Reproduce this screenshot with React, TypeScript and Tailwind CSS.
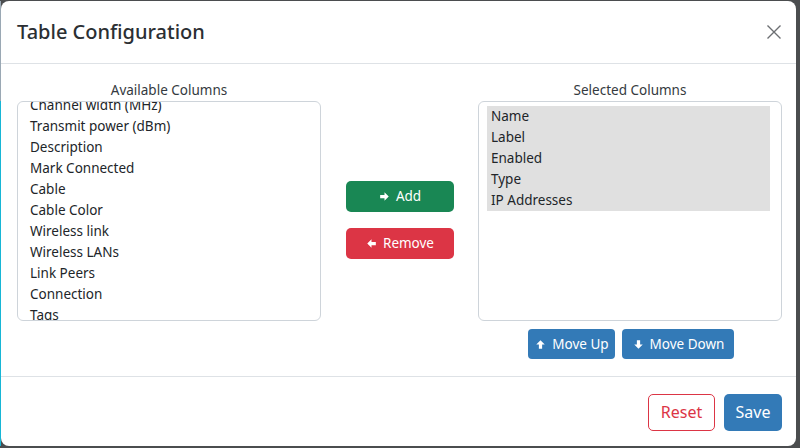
import { useState } from 'react'

const available = [
  'Channel width (MHz)',
  'Transmit power (dBm)',
  'Description',
  'Mark Connected',
  'Cable',
  'Cable Color',
  'Wireless link',
  'Wireless LANs',
  'Link Peers',
  'Connection',
  'Tags',
]

const selectedCols = ['Name', 'Label', 'Enabled', 'Type', 'IP Addresses']

type ArrowDir = 'right' | 'left' | 'up' | 'down'

const arrowPaths: Record<ArrowDir, string> = {
  right: 'M4,15V9H12V4.16L19.84,12L12,19.84V15H4Z',
  left: 'M20,9V15H12V19.84L4.16,12L12,4.16V9H20Z',
  up: 'M15,20H9V12H4.16L12,4.16L19.84,12H15V20Z',
  down: 'M9,4H15V12H19.84L12,19.84L4.16,12H9V4Z',
}

function Arrow({ dir }: { dir: ArrowDir }) {
  return (
    <svg viewBox="0 0 24 24" className="w-[13px] h-[13px] fill-current">
      <path d={arrowPaths[dir]} />
    </svg>
  )
}

export default function App() {
  const [picked] = useState(selectedCols)

  return (
    <div className="w-[800px] h-[448px] bg-[#4b4d4f] flex pt-px pb-[2px] pr-[4px] font-['Noto_Sans',sans-serif] text-[#212529]">
      {/* backdrop strip on the left */}
      <div className="w-px flex flex-col">
        <div className="h-[100px] bg-[#9aa8b4]" />
        <div className="flex-1 bg-[#17b6d6]" />
      </div>

      <div className="flex-1 bg-white rounded-[8px] flex flex-col overflow-hidden">
        {/* header */}
        <div className="h-[63px] flex items-center justify-between pl-[16px] pr-[14px] border-b border-[#dee2e6]">
          <h1 className="text-[20px] font-medium text-[#2b2f33]">Table Configuration</h1>
          <button className="text-[#6c6f72]" title="Close">
            <svg viewBox="0 0 16 16" className="w-[16px] h-[16px]" stroke="currentColor" strokeWidth="1.4" fill="none">
              <path d="M1.5 1.5L14.5 14.5M14.5 1.5L1.5 14.5" />
            </svg>
          </button>
        </div>

        {/* body */}
        <div className="flex-1 flex pl-[16px] pt-[16px]">
          <div className="w-[304px] flex flex-col">
            <div className="text-[13.5px] text-center leading-[21px] text-[#343a40]">Available Columns</div>
            <div className="h-[220px] border border-[#ced4da] rounded-[6px] overflow-hidden px-[8px] pt-[4px]">
              <ul className="-mt-[11px] text-[13.5px] leading-[21px]">
                {available.map((c) => (
                  <li key={c} className="px-[4px] whitespace-nowrap">{c}</li>
                ))}
              </ul>
            </div>
          </div>

          <div className="w-[157px] flex flex-col items-center pt-[101px] gap-[16px]">
            <button className="w-[108px] h-[31px] rounded-[5px] bg-[#198754] text-white text-[13.5px] flex items-center justify-center gap-[5px]">
              <Arrow dir="right" />
              Add
            </button>
            <button className="w-[108px] h-[31px] rounded-[5px] bg-[#dc3545] text-white text-[13.5px] flex items-center justify-center gap-[5px]">
              <Arrow dir="left" />
              Remove
            </button>
          </div>

          <div className="w-[304px] flex flex-col">
            <div className="text-[13.5px] text-center leading-[21px] text-[#343a40]">Selected Columns</div>
            <div className="h-[220px] border border-[#ced4da] rounded-[6px] overflow-hidden pl-[8px] pr-[11px] pt-[4px]">
              <ul className="text-[13.5px] leading-[21px]">
                {picked.map((c) => (
                  <li key={c} className="px-[4px] bg-[#e0e0e0] whitespace-nowrap">{c}</li>
                ))}
              </ul>
            </div>
            <div className="flex justify-center gap-[7px] mt-[8px] pl-[2px]">
              <button className="w-[87px] h-[30px] rounded-[4px] bg-[#337ab7] text-white text-[13.5px] flex items-center justify-center gap-[5px]">
                <Arrow dir="up" />
                Move Up
              </button>
              <button className="w-[112px] h-[30px] rounded-[4px] bg-[#337ab7] text-white text-[13.5px] flex items-center justify-center gap-[5px]">
                <Arrow dir="down" />
                Move Down
              </button>
            </div>
          </div>
        </div>

        {/* footer */}
        <div className="h-[70px] border-t border-[#dee2e6] flex items-center justify-end gap-[9px] pr-[14px] pt-[1px]">
          <button className="w-[67px] h-[37px] rounded-[5px] border border-[#dc3545] text-[#dc3545] text-[16px]">Reset</button>
          <button className="w-[58px] h-[37px] rounded-[5px] bg-[#337ab7] text-white text-[16px]">Save</button>
        </div>
      </div>
    </div>
  )
}
